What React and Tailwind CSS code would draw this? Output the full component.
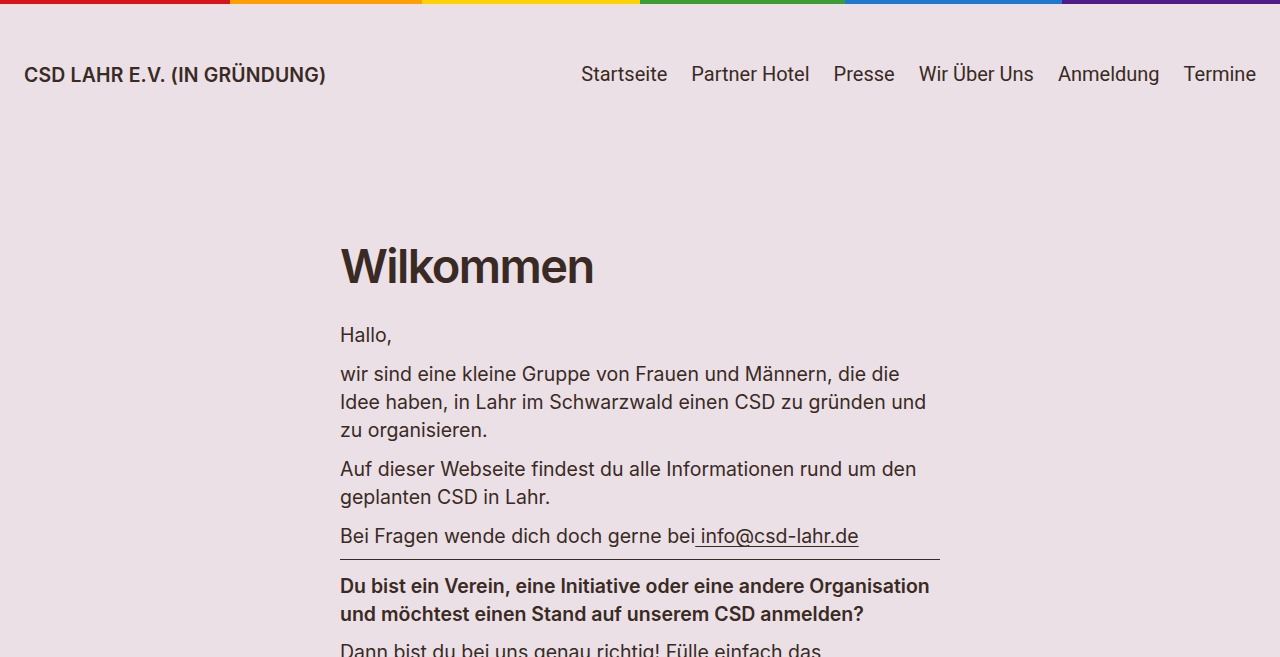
import React from "react";

const stripes = [
  { w: "w-[230px]", c: "bg-[#d7141a]" },
  { w: "w-[192px]", c: "bg-[#ffa000]" },
  { w: "w-[218px]", c: "bg-[#ffd200]" },
  { w: "w-[205px]", c: "bg-[#3c9d37]" },
  { w: "w-[217px]", c: "bg-[#1d78d2]" },
  { w: "flex-1", c: "bg-[#4f1a8a]" },
];

const nav = ["Startseite", "Partner Hotel", "Presse", "Wir Über Uns", "Anmeldung", "Termine"];

export default function App() {
  return (
    <div className="min-h-screen bg-[#eae0e5] text-[#3a2a24] font-['Inter',sans-serif]">
      <div className="flex h-[4px]">
        {stripes.map((s, i) => (
          <div key={i} className={`${s.w} ${s.c} h-full`} />
        ))}
      </div>
      <header className="flex items-center justify-between px-6 pt-[56px] pb-[56px]">
        <div className="text-[19.4px] font-semibold tracking-[0.2px] leading-[28px] translate-y-[1px]">CSD LAHR E.V. (IN GRÜNDUNG)</div>
        <nav className="flex gap-6 font-['Roboto',sans-serif] text-[20px] leading-[28px]">
          {nav.map((n) => (
            <a key={n} href="#" className="text-[#3a2a24]">{n}</a>
          ))}
        </nav>
      </header>
      <main className="mx-auto w-[600px] pt-[92px]">
        <h1 className="text-[47px] font-semibold leading-[60px] tracking-[-1.6px] mb-[25px]">Wilkommen</h1>
        <div className="text-[19.5px] leading-[28px] flex flex-col gap-[11px]">
          <p>Hallo,</p>
          <p>wir sind eine kleine Gruppe von Frauen und Männern, die die Idee haben, in Lahr im Schwarzwald einen CSD zu gründen und zu organisieren.</p>
          <p>Auf dieser Webseite findest du alle Informationen rund um den geplanten CSD in Lahr.</p>
          <p>
            Bei Fragen wende dich doch gerne bei<a href="#" className="underline underline-offset-[3px] decoration-1"> info@csd-lahr.de</a>
          </p>
        </div>
        <hr className="border-0 border-t border-[#3a2a24] mt-[9px] mb-[12px]" />
        <div className="text-[19.5px] leading-[28px] flex flex-col gap-[10px]">
          <p className="font-semibold">Du bist ein Verein, eine Initiative oder eine andere Organisation und möchtest einen Stand auf unserem CSD anmelden?</p>
          <p>Dann bist du bei uns genau richtig! Fülle einfach das Anmeldeformular aus und wir melden uns bei dir.</p>
        </div>
      </main>
    </div>
  );
}
